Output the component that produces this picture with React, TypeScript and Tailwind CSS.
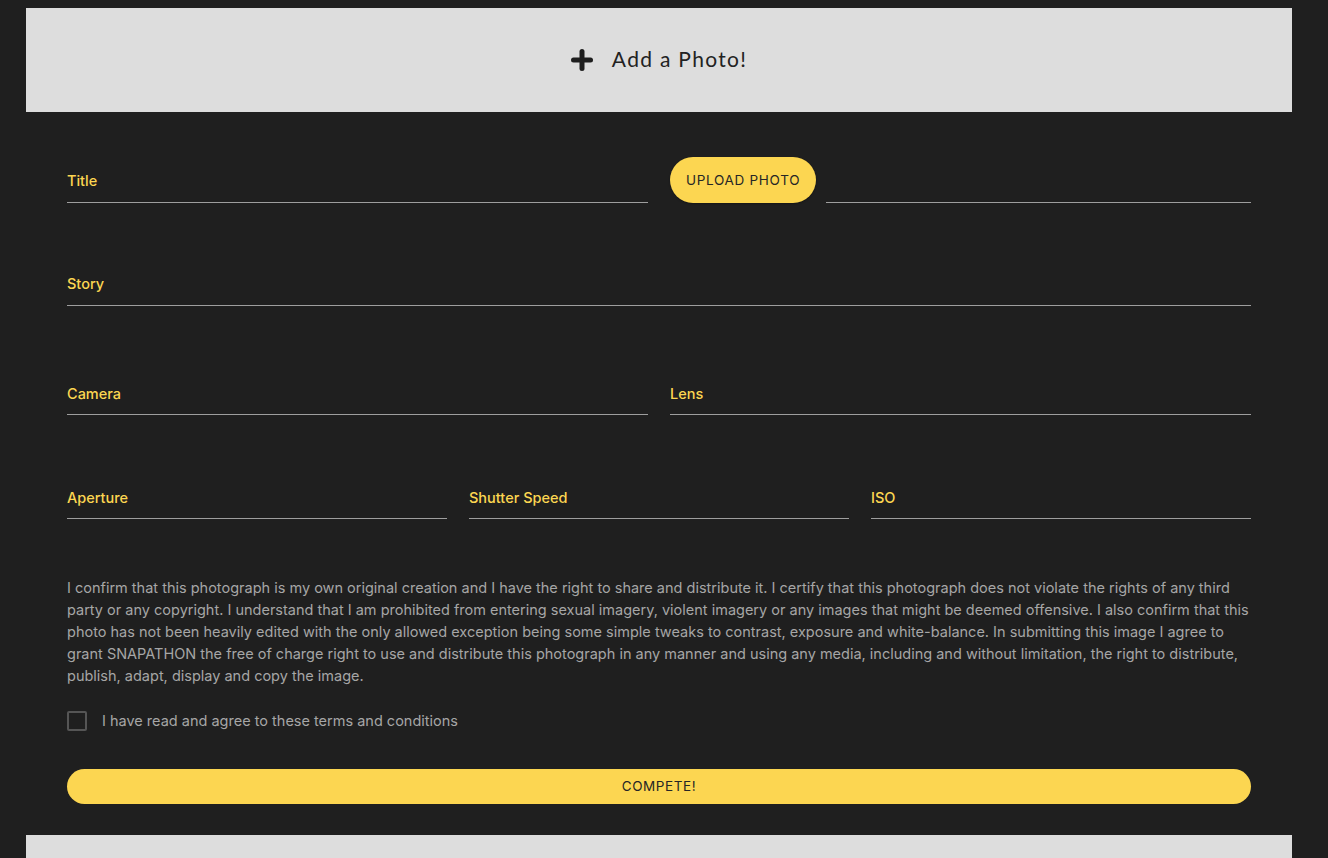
import React from "react";

function Field({ label, className = "" }: { label?: string; className?: string }) {
  return (
    <div className={`h-[46px] border-b border-[#9e9e9e] flex items-end pb-[11px] ${className}`}>
      {label ? (
        <span className="text-[14.5px] leading-[18px] font-medium text-[#fcd651]">{label}</span>
      ) : null}
    </div>
  );
}

export default function App() {
  return (
    <div
      className="min-h-[858px] bg-[#1f1f1f] pt-[8px]"
      style={{ fontFamily: "Inter, 'Noto Sans', sans-serif" }}
    >
      <div className="ml-[26px] w-[1266px]">
        <div className="h-[104px] bg-[#dddddd] flex items-center justify-center gap-[19px] pb-[2px]">
          <svg width="22" height="22" viewBox="0 0 22 22" className="mt-[1px]">
            <rect x="8.5" y="0" width="5" height="22" rx="2.5" fill="#1e1e1e" />
            <rect x="0" y="8.5" width="22" height="5" rx="2.5" fill="#1e1e1e" />
          </svg>
          <span
            className="text-[21px] text-[#222222] tracking-[1.3px]"
            style={{ fontFamily: "Lato, 'Noto Sans', sans-serif" }}
          >
            Add a Photo!
          </span>
        </div>

        <div className="px-[41px] pt-[45px] pb-[31px]">
          <div className="flex gap-[22px]">
            <Field label="Title" className="w-[581px] pb-[12px]" />
            <div className="flex-1 flex items-end">
              <button className="h-[46px] px-[16px] rounded-full bg-[#fcd651] text-[#262626] text-[13.5px] tracking-[0.7px] font-normal shrink-0 shadow-[0_1px_2px_rgba(0,0,0,0.3)]">
                UPLOAD PHOTO
              </button>
              <div className="flex-1 ml-[10px] h-[46px] border-b border-[#9e9e9e]" />
            </div>
          </div>

          <Field label="Story" className="mt-[57px] pb-[12px]" />

          <div className="mt-[63px] grid grid-cols-2 gap-[22px]">
            <Field label="Camera" />
            <Field label="Lens" />
          </div>

          <div className="mt-[58px] grid grid-cols-3 gap-[22px]">
            <Field label="Aperture" />
            <Field label="Shutter Speed" />
            <Field label="ISO" />
          </div>

          <p className="mt-[58px] text-[14.5px] leading-[22px] text-[#a6a6a6] whitespace-nowrap">
            I confirm that this photograph is my own original creation and I have the right to share and distribute it. I certify that this photograph does not violate the rights of any third
            <br />
            party or any copyright. I understand that I am prohibited from entering sexual imagery, violent imagery or any images that might be deemed offensive. I also confirm that this
            <br />
            photo has not been heavily edited with the only allowed exception being some simple tweaks to contrast, exposure and white-balance. In submitting this image I agree to
            <br />
            grant SNAPATHON the free of charge right to use and distribute this photograph in any manner and using any media, including and without limitation, the right to distribute,
            <br />
            publish, adapt, display and copy the image.
          </p>

          <div className="mt-[24px] flex items-center">
            <div className="w-[20px] h-[20px] border-2 border-[#555555] rounded-[2px]" />
            <span className="ml-[15px] text-[14.5px] leading-[20px] text-[#a6a6a6]">
              I have read and agree to these terms and conditions
            </span>
          </div>

          <button className="mt-[38px] w-full h-[35px] rounded-full bg-[#fcd651] text-[#262626] text-[13.5px] tracking-[0.6px]">
            COMPETE!
          </button>
        </div>

        <div className="h-[40px] bg-[#dddddd]" />
      </div>
    </div>
  );
}
